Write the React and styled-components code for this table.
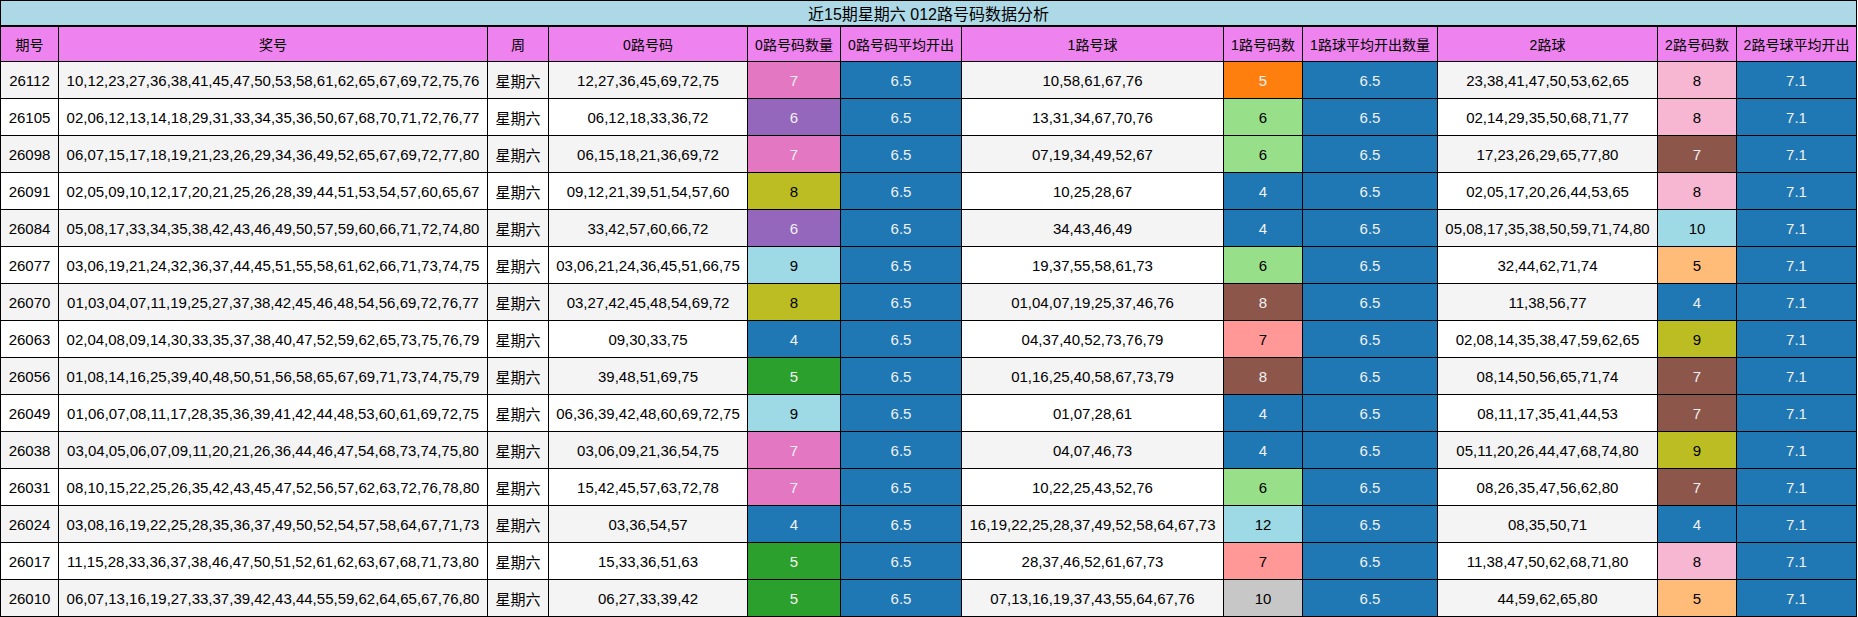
import React from "react";
import styled, { createGlobalStyle } from "styled-components";

const GlobalStyle = createGlobalStyle`
  html, body { margin: 0; padding: 0; background: #ffffff; }
  body { font-family: "Liberation Sans", Arial, "Noto Sans CJK SC", sans-serif; }
`;

const COLS = [58, 429, 61, 199, 93, 121, 262, 79, 135, 220, 79, 120];

const Grid = styled.div`
  display: grid;
  grid-template-columns: ${COLS.map((w) => `${w}px`).join(" ")};
  grid-template-rows: 26px 35px;
  grid-auto-rows: 37px;
  width: max-content;
  border-left: 1px solid #000;
  border-top: 1px solid #000;
  font-family: "Liberation Sans", Arial, "Noto Sans CJK SC", sans-serif;
  color: #000;
`;

const Title = styled.div`
  grid-column: 1 / -1;
  box-sizing: border-box;
  background: #add8e6;
  border-right: 1px solid #000;
  border-bottom: 2px solid #000;
  display: flex;
  align-items: center;
  justify-content: center;
  font-size: 16px;
`;

const HeadCell = styled.div`
  box-sizing: border-box;
  background: #ee82ee;
  border-right: 1px solid #000;
  border-bottom: 1px solid #000;
  display: flex;
  align-items: center;
  justify-content: center;
  font-size: 14px;
  white-space: nowrap;
`;

const Cell = styled.div`
  box-sizing: border-box;
  background: ${(p) => p.$bg};
  color: ${(p) => (p.$light ? "#f1f1f1" : "#000000")};
  border-right: 1px solid #000;
  border-bottom: 1px solid #000;
  display: flex;
  align-items: center;
  justify-content: center;
  font-size: 15px;
  white-space: nowrap;
  overflow: hidden;
`;

const C = {
  pink: ["#e377c2", true],
  purple: ["#9467bd", true],
  olive: ["#bcbd22", false],
  blue: ["#1f77b4", true],
  cyan: ["#9edae5", false],
  green: ["#2ca02c", true],
  orange: ["#ff7f0e", true],
  lgreen: ["#98df8a", false],
  brown: ["#8c564b", true],
  lred: ["#ff9896", false],
  gray: ["#c7c7c7", false],
  lpink: ["#f7b6d2", false],
  lorange: ["#ffbb78", false],
};

const headers = [
  "期号",
  "奖号",
  "周",
  "0路号码",
  "0路号码数量",
  "0路号码平均开出",
  "1路号球",
  "1路号码数",
  "1路球平均开出数量",
  "2路球",
  "2路号码数",
  "2路号球平均开出",
];

const rows = [
  ["26112", "10,12,23,27,36,38,41,45,47,50,53,58,61,62,65,67,69,72,75,76", "12,27,36,45,69,72,75", 7, "pink", "10,58,61,67,76", 5, "orange", "23,38,41,47,50,53,62,65", 8, "lpink"],
  ["26105", "02,06,12,13,14,18,29,31,33,34,35,36,50,67,68,70,71,72,76,77", "06,12,18,33,36,72", 6, "purple", "13,31,34,67,70,76", 6, "lgreen", "02,14,29,35,50,68,71,77", 8, "lpink"],
  ["26098", "06,07,15,17,18,19,21,23,26,29,34,36,49,52,65,67,69,72,77,80", "06,15,18,21,36,69,72", 7, "pink", "07,19,34,49,52,67", 6, "lgreen", "17,23,26,29,65,77,80", 7, "brown"],
  ["26091", "02,05,09,10,12,17,20,21,25,26,28,39,44,51,53,54,57,60,65,67", "09,12,21,39,51,54,57,60", 8, "olive", "10,25,28,67", 4, "blue", "02,05,17,20,26,44,53,65", 8, "lpink"],
  ["26084", "05,08,17,33,34,35,38,42,43,46,49,50,57,59,60,66,71,72,74,80", "33,42,57,60,66,72", 6, "purple", "34,43,46,49", 4, "blue", "05,08,17,35,38,50,59,71,74,80", 10, "cyan"],
  ["26077", "03,06,19,21,24,32,36,37,44,45,51,55,58,61,62,66,71,73,74,75", "03,06,21,24,36,45,51,66,75", 9, "cyan", "19,37,55,58,61,73", 6, "lgreen", "32,44,62,71,74", 5, "lorange"],
  ["26070", "01,03,04,07,11,19,25,27,37,38,42,45,46,48,54,56,69,72,76,77", "03,27,42,45,48,54,69,72", 8, "olive", "01,04,07,19,25,37,46,76", 8, "brown", "11,38,56,77", 4, "blue"],
  ["26063", "02,04,08,09,14,30,33,35,37,38,40,47,52,59,62,65,73,75,76,79", "09,30,33,75", 4, "blue", "04,37,40,52,73,76,79", 7, "lred", "02,08,14,35,38,47,59,62,65", 9, "olive"],
  ["26056", "01,08,14,16,25,39,40,48,50,51,56,58,65,67,69,71,73,74,75,79", "39,48,51,69,75", 5, "green", "01,16,25,40,58,67,73,79", 8, "brown", "08,14,50,56,65,71,74", 7, "brown"],
  ["26049", "01,06,07,08,11,17,28,35,36,39,41,42,44,48,53,60,61,69,72,75", "06,36,39,42,48,60,69,72,75", 9, "cyan", "01,07,28,61", 4, "blue", "08,11,17,35,41,44,53", 7, "brown"],
  ["26038", "03,04,05,06,07,09,11,20,21,26,36,44,46,47,54,68,73,74,75,80", "03,06,09,21,36,54,75", 7, "pink", "04,07,46,73", 4, "blue", "05,11,20,26,44,47,68,74,80", 9, "olive"],
  ["26031", "08,10,15,22,25,26,35,42,43,45,47,52,56,57,62,63,72,76,78,80", "15,42,45,57,63,72,78", 7, "pink", "10,22,25,43,52,76", 6, "lgreen", "08,26,35,47,56,62,80", 7, "brown"],
  ["26024", "03,08,16,19,22,25,28,35,36,37,49,50,52,54,57,58,64,67,71,73", "03,36,54,57", 4, "blue", "16,19,22,25,28,37,49,52,58,64,67,73", 12, "cyan", "08,35,50,71", 4, "blue"],
  ["26017", "11,15,28,33,36,37,38,46,47,50,51,52,61,62,63,67,68,71,73,80", "15,33,36,51,63", 5, "green", "28,37,46,52,61,67,73", 7, "lred", "11,38,47,50,62,68,71,80", 8, "lpink"],
  ["26010", "06,07,13,16,19,27,33,37,39,42,43,44,55,59,62,64,65,67,76,80", "06,27,33,39,42", 5, "green", "07,13,16,19,37,43,55,64,67,76", 10, "gray", "44,59,62,65,80", 5, "lorange"],
];

const BLUE = "#1f77b4";

function DataRow({ r, idx }) {
  const base = idx % 2 === 0 ? "#f4f4f4" : "#ffffff";
  const [issue, nums, r0, n0, c0, r1, n1, c1, r2, n2, c2] = r;
  return (
    <>
      <Cell $bg={base}>{issue}</Cell>
      <Cell $bg={base}>{nums}</Cell>
      <Cell $bg={base}>星期六</Cell>
      <Cell $bg={base}>{r0}</Cell>
      <Cell $bg={C[c0][0]} $light={C[c0][1]}>{n0}</Cell>
      <Cell $bg={BLUE} $light>6.5</Cell>
      <Cell $bg={base}>{r1}</Cell>
      <Cell $bg={C[c1][0]} $light={C[c1][1]}>{n1}</Cell>
      <Cell $bg={BLUE} $light>6.5</Cell>
      <Cell $bg={base}>{r2}</Cell>
      <Cell $bg={C[c2][0]} $light={C[c2][1]}>{n2}</Cell>
      <Cell $bg={BLUE} $light>7.1</Cell>
    </>
  );
}

export default function App() {
  return (
    <>
      <GlobalStyle />
      <Grid>
        <Title>近15期星期六 012路号码数据分析</Title>
        {headers.map((h) => (
          <HeadCell key={h}>{h}</HeadCell>
        ))}
        {rows.map((r, i) => (
          <DataRow key={r[0]} r={r} idx={i} />
        ))}
      </Grid>
    </>
  );
}
